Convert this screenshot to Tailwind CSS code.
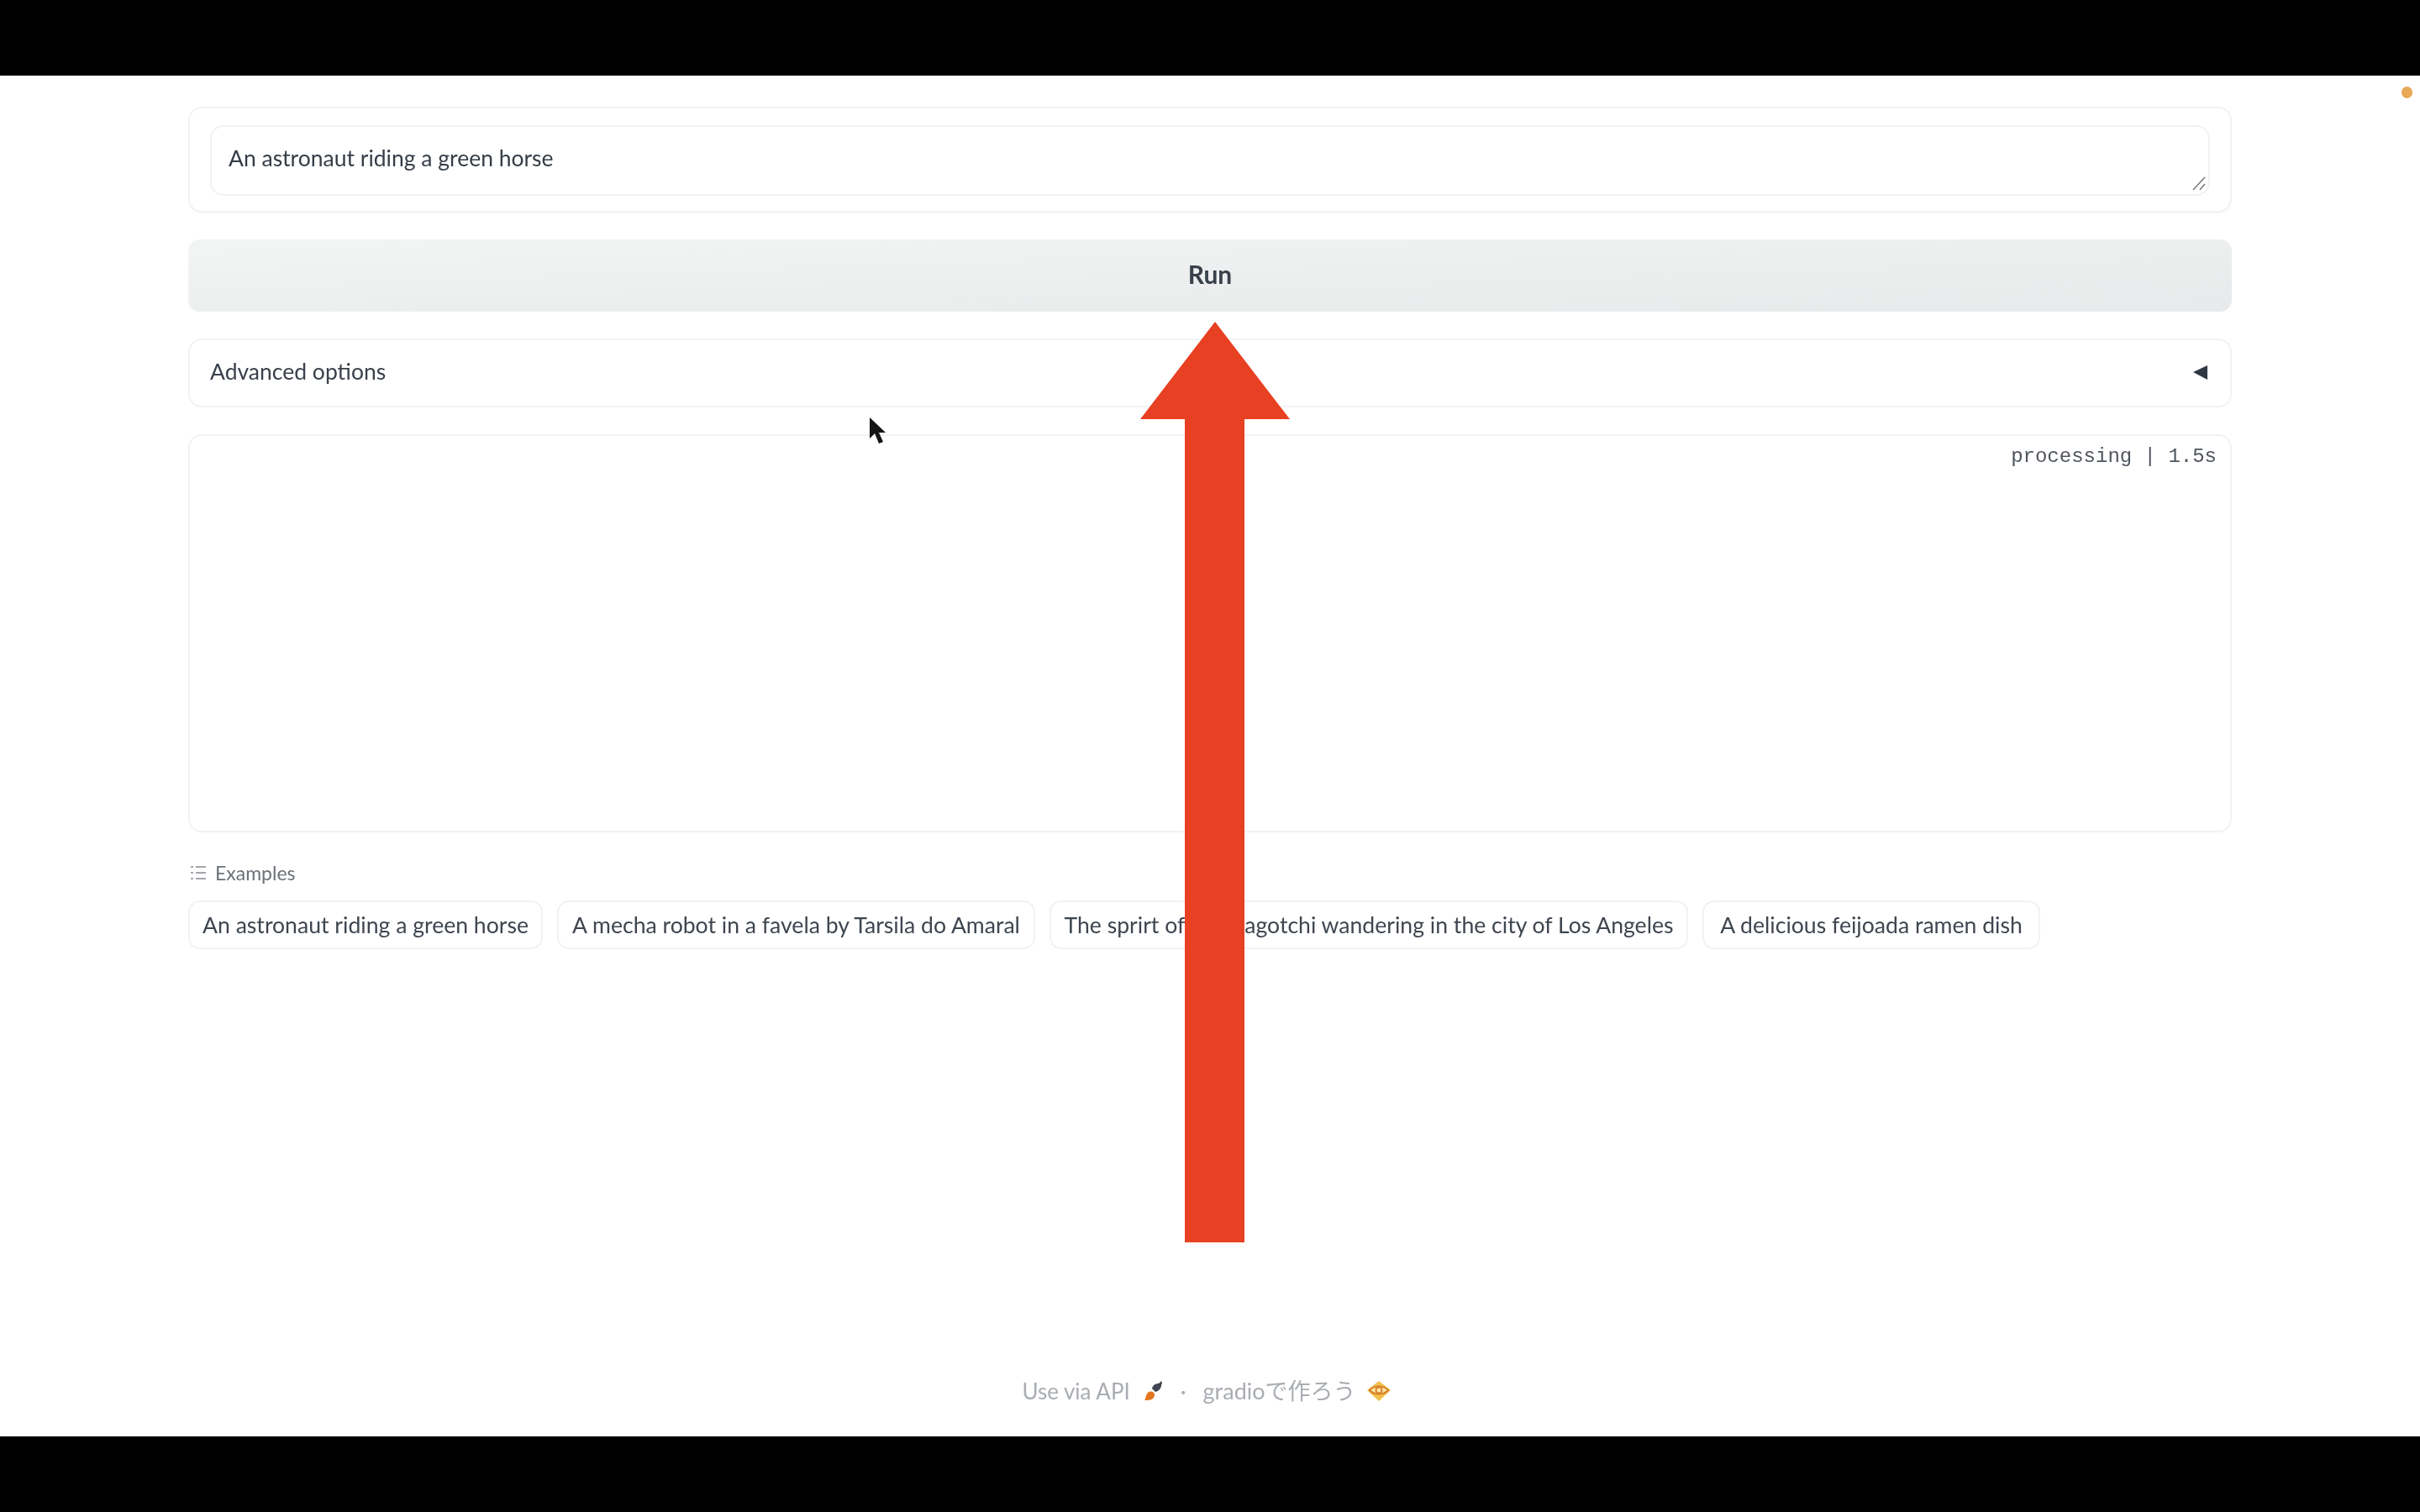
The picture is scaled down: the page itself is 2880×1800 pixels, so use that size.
<!doctype html>
<html lang="ja">
<head>
<meta charset="utf-8">
<script src="https://cdn.jsdelivr.net/npm/@tailwindcss/browser@4"></script>
<title>Run</title>
</head>
<body class="bg-black">
<div class="relative w-[2880px] h-[1800px] bg-black overflow-hidden font-['Lato','Noto_Sans_CJK_JP',sans-serif]">
  <div class="h-[90px] bg-black"></div>
  <main class="relative h-[1620px] bg-white flex flex-col px-[224px] pt-[37px] text-[#3f4650] blur-[0.6px]">
    <section class="h-[126px] shrink-0 rounded-[16px] border-2 border-[#f1f2f3] p-[20px_24px] shadow-[0_2px_3px_rgba(0,0,0,0.02)]">
      <div class="relative h-[84px] rounded-[16px] border-2 border-[#f1f2f3] flex items-center pl-[20px] pb-[4px] text-[26.5px] text-[#363d47]">
        An astronaut riding a green horse
        <svg class="absolute right-[1px] bottom-[3px]" width="20" height="20" viewBox="0 0 20 20" fill="none" stroke="#777b80" stroke-width="1.6"><path d="M3 18 17 3M11 18l6-7"/></svg>
      </div>
    </section>
    <button class="mt-[32px] h-[86px] shrink-0 rounded-[14px] bg-gradient-to-br from-[#f3f4f4] to-[#e7e9ea] pb-[4px] text-[30px] font-bold text-[#3a414b]">Run</button>
    <section class="mt-[32px] h-[82px] shrink-0 rounded-[16px] border-2 border-[#f1f2f3] flex items-center justify-between pl-[24px] pr-[26px] pb-[3px] text-[26.5px] text-[#3a414b]">
      <span>Advanced options</span>
      <svg width="18" height="18" viewBox="0 0 18 18"><path d="M0 9 17 1v17z" fill="#2f3742"/></svg>
    </section>
    <section class="mt-[32px] h-[474px] shrink-0 rounded-[16px] border-2 border-[#f1f2f3] flex justify-end pr-[16px] pt-[8px] font-['Liberation_Mono',monospace] text-[24px] leading-[34px] text-[#4f555d]">
      <span>processing | 1.5s</span>
    </section>
    <div class="mt-[31px] h-[34px] flex items-center gap-[10px] pl-[2px] text-[23px] text-[#6b7178]">
      <svg width="20" height="20" viewBox="0 0 20 20" stroke="#a3a7ac" stroke-width="2"><path d="M1 3h3M7 3h12M1 10h3M7 10h12M1 17h3M7 17h12"/></svg>
      <span>Examples</span>
    </div>
    <div class="mt-[16px] flex gap-[17px] text-[26.6px] text-[#3f4650]">
      <div class="h-[58px] w-[422px] pt-[2px] rounded-[14px] border-2 border-[#f1f2f3] flex items-center justify-center whitespace-nowrap">An astronaut riding a green horse</div>
      <div class="h-[58px] w-[569px] pt-[2px] rounded-[14px] border-2 border-[#f1f2f3] flex items-center justify-center whitespace-nowrap">A mecha robot in a favela by Tarsila do Amaral</div>
      <div class="h-[58px] w-[760px] pt-[2px] rounded-[14px] border-2 border-[#f1f2f3] flex items-center justify-center whitespace-nowrap">The sprirt of a tamagotchi wandering in the city of Los Angeles</div>
      <div class="h-[58px] w-[402px] pt-[2px] rounded-[14px] border-2 border-[#f1f2f3] flex items-center justify-center whitespace-nowrap">A delicious feijoada ramen dish</div>
    </div>
    <footer class="absolute left-0 right-0 top-[1546px] h-[40px] flex items-center justify-center pr-[8px] text-[26px] text-[#a9adb2]">
      <span>Use via API</span>
      <svg class="ml-[14px]" width="26" height="26" viewBox="0 0 26 26"><path d="M12 10c1-4 4-6 8-6l3-3 1 3-1 2c0 4-3 7-7 8z" fill="#3f4650"/><path d="M3 24c2-2 1-6 4-9 2-2 5-2 7 0s1 5-1 7c-3 2-6 2-10 2z" fill="#e2761f"/></svg>
      <span class="mx-[20px]">·</span>
      <span class="text-[27px]">gradioで作ろう</span>
      <svg class="ml-[12px]" width="30" height="26" viewBox="0 0 30 26"><path d="M15 1 29 12 15 25 1 12z" fill="#f0c04a"/><path d="M4 12c5-6 17-6 22 0-5 6-17 6-22 0z" fill="#f9e6a6" stroke="#d9822b" stroke-width="2"/><circle cx="15" cy="12" r="3.5" fill="none" stroke="#d9822b" stroke-width="2"/></svg>
    </footer>
    <div class="absolute left-[2858px] top-[13px] w-[13px] h-[14px] rounded-full bg-[#e8a959]"></div>
    <svg class="absolute left-[1034px] top-[406px]" width="22" height="36" viewBox="0 0 22 36"><path d="M1 1v25l6-6 5 12 5-2-5-11h8z" fill="#141414"/></svg>
    <svg class="absolute left-[1355px] top-[292px]" width="182" height="1098" viewBox="0 0 182 1098"><path d="M91 1 180 117h-54v980H55V117H2z" fill="#e84022"/></svg>
  </main>
  <div class="h-[90px] bg-black"></div>
</div>
</body>
</html>
